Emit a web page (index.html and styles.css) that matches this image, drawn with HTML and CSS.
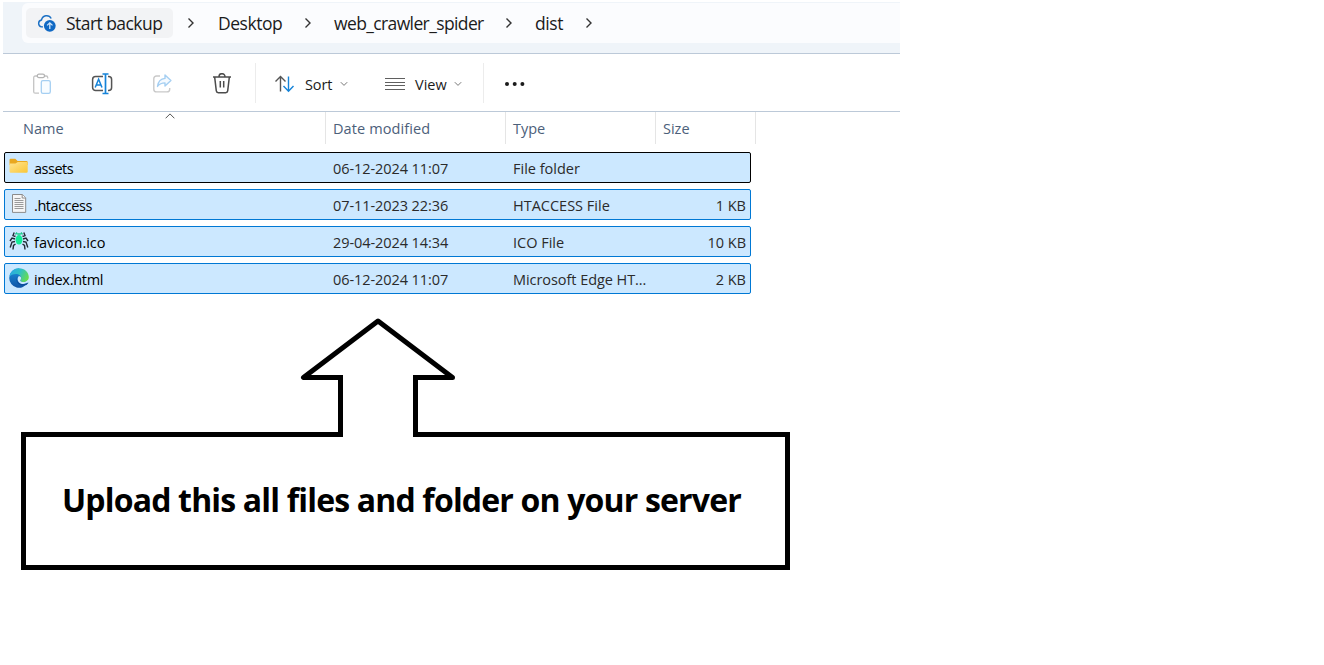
FILE: index.html
```html
<!DOCTYPE html>
<html lang="en">
<head>
<meta charset="utf-8">
<title>dist</title>
<link rel="stylesheet" href="styles.css">
</head>
<body>
<main class="window">
  <header class="address">
    <nav class="address-field">
      <span class="backup">
        <svg class="cloud" width="20" height="20" viewBox="0 0 20 20" fill="none">
          <path d="M6 13.900H4.600A3.500 3.500 0 0 1 4.500 7 5.200 5.200 0 0 1 14.200 5.500" stroke="#1a6fc4" stroke-width="1.400"/>
          <circle cx="12.800" cy="12.800" r="5.900" fill="#1069c4"/>
          <path d="M12.800 16V10M10.100 12.400l2.700-2.600 2.700 2.600" stroke="#cfe5fa" stroke-width="1.300"/>
        </svg>
        <span class="t-backup">Start backup</span>
      </span>
      <svg class="chev c1" width="8" height="12" viewBox="0 0 8 12"><path d="M1.500 1.500L6 6 1.500 10.500"/></svg>
      <span class="crumb t-desktop">Desktop</span>
      <svg class="chev c2" width="8" height="12" viewBox="0 0 8 12"><path d="M1.500 1.500L6 6 1.500 10.500"/></svg>
      <span class="crumb t-spider">web_crawler_spider</span>
      <svg class="chev c3" width="8" height="12" viewBox="0 0 8 12"><path d="M1.500 1.500L6 6 1.500 10.500"/></svg>
      <span class="crumb t-dist">dist</span>
      <svg class="chev c4" width="8" height="12" viewBox="0 0 8 12"><path d="M1.500 1.500L6 6 1.500 10.500"/></svg>
    </nav>
  </header>

  <div class="toolbar">
    <div class="tools">
      <svg width="22" height="22" viewBox="0 0 22 22" fill="none" stroke-width="1.300">
        <path d="M6 3H4.200a1.500 1.500 0 0 0-1.500 1.500v14.200a1.500 1.500 0 0 0 1.500 1.500H8M13 3h2.200a1.500 1.500 0 0 1 1.500 1.500V5.500" stroke="#c4c4c4"/>
        <rect x="6.300" y="1.200" width="7.200" height="3.400" rx="1.600" stroke="#b4b4b4"/>
        <rect x="10.300" y="7.600" width="9" height="12.800" rx="1.600" stroke="#a5cff2" fill="#f8fcff"/>
      </svg>
      <svg width="22" height="22" viewBox="0 0 22 22" fill="none" stroke-width="1.500">
        <path d="M12 3.400H4.600A3 3 0 0 0 1.600 6.400v8.200a3 3 0 0 0 3 3H12M17 3.400h.6a3 3 0 0 1 3 3v8.200a3 3 0 0 1-3 3H17" stroke="#555"/>
        <path d="M14.500 1v19.500M11.500 1h6M11.500 20.500h6" stroke="#1583d8" stroke-width="1.700"/>
        <path d="M4.200 14.500l3.400-8.300 3.400 8.300M5.300 12h4.600" stroke="#1583d8" stroke-width="1.500"/>
      </svg>
      <svg width="22" height="22" viewBox="0 0 22 22" fill="none" stroke-width="1.400">
        <path d="M9 3H5.500A2.700 2.700 0 0 0 2.800 5.700v10.500a2.700 2.700 0 0 0 2.700 2.700H16a2.700 2.700 0 0 0 2.700-2.700V15" stroke="#c9c9c9"/>
        <path d="M14 2l5.900 5.500L14 13.100V9.900c-3.500 0-5.500 1-7.500 3.500.6-4.500 3-7.600 7.500-8z" stroke="#a5cff2" stroke-linejoin="round" fill="#f5faff"/>
      </svg>
      <svg width="22" height="22" viewBox="0 0 22 22" fill="none" stroke="#4c4c4c" stroke-width="1.500">
        <path d="M2 4h18M8 3.700a3 3 0 0 1 6 0M3.700 4.300l1.600 13.600a2 2 0 0 0 2 1.800h7.400a2 2 0 0 0 2-1.800l1.600-13.600M9.300 8v6.500M12.700 8v6.500"/>
      </svg>
    </div>
    <div class="menus">
      <svg class="sort-icon" width="22" height="18" viewBox="0 0 22 18" fill="none" stroke-width="1.400">
        <path d="M6.500 16.500V1.500M1.500 6.500l5-5 5 5" stroke="#555"/>
        <path d="M14.500 1.500v15M9.500 11l5 5.300 5-5.300" stroke="#1583d8"/>
      </svg>
      <span class="t-sort">Sort</span>
      <svg class="down d1" width="8" height="6" viewBox="0 0 8 6"><path d="M.8 1.200L4 4.400 7.200 1.200"/></svg>
      <svg class="view-icon" width="20" height="14" viewBox="0 0 20 14"><path d="M0 1.500h20M0 5.500h20M0 8.500h20M0 12.500h20" stroke="#5f5f5f"/></svg>
      <span class="t-view">View</span>
      <svg class="down d2" width="8" height="6" viewBox="0 0 8 6"><path d="M.8 1.200L4 4.400 7.200 1.200"/></svg>
    </div>
    <svg class="more" width="22" height="6" viewBox="0 0 22 6"><circle cx="3" cy="3" r="2"/><circle cx="10.700" cy="3" r="2"/><circle cx="18.400" cy="3" r="2"/></svg>
  </div>

  <div class="columns">
    <span class="head-name">Name<svg class="sorted" width="10" height="6" viewBox="0 0 10 6"><path d="M.6 5.300L5 .9l4.400 4.400" fill="none" stroke="#555"/></svg></span>
    <span class="t-hdate">Date modified</span><span class="t-htype">Type</span><span class="t-hsize">Size</span>
  </div>

  <section class="files">
    <div class="row focused">
      <span class="name">
        <svg width="20" height="20" viewBox="0 0 20 20">
          <defs><linearGradient id="folder" x1="0" y1="0" x2="1" y2="1"><stop offset="0" stop-color="#ffe594"/><stop offset="1" stop-color="#fac634"/></linearGradient></defs>
          <path d="M.5 3a1.200 1.200 0 0 1 1.200-1.200h4.600L8.600 4h8.900a1.200 1.200 0 0 1 1.200 1.200V8H.5z" fill="#e9a820"/>
          <path d="M.5 6.500h6L8.800 5h8.700a1.200 1.200 0 0 1 1.200 1.200v8.400a1.200 1.200 0 0 1-1.200 1.200H1.700a1.200 1.200 0 0 1-1.200-1.200z" fill="url(#folder)"/>
        </svg><span class="t-assets">assets</span></span>
      <span class="t-date">06-12-2024 11:07</span><span class="t-folder">File folder</span><span class="size"></span>
    </div>
    <div class="row">
      <span class="name">
        <svg width="20" height="20" viewBox="0 0 20 20">
          <path d="M3.500.5h10l3.200 3.200v14.700H3.500z" fill="#f5f5f5" stroke="#8b8b8b"/>
          <path d="M13.200.5V4h3.500" fill="#fff" stroke="#8b8b8b"/>
          <path d="M5.500 4.500h6M5.500 6.500h9M5.500 8.500h9M5.500 10.500h9M5.500 12.500h9M5.500 14.500h9" stroke="#9a9a9a"/>
        </svg><span class="t-ht">.htaccess</span></span>
      <span class="t-date">07-11-2023 22:36</span><span class="t-htfile">HTACCESS File</span><span class="size">1 KB</span>
    </div>
    <div class="row">
      <span class="name">
        <svg width="20" height="20" viewBox="0 0 20 20">
          <path d="M6.500 5.500L4 4.500l1.200-3M6 8L3 7 1 10M6 10.500L3 11l-1.800 5.500M6.500 13l-2 1.500-.5 4M13.500 5.500l2.500-1-1.200-3M14 8l3-1 2 3M14 10.500l3 .5 1.800 5.500M13.500 13l2 1.500.5 4" fill="none" stroke="#202a34" stroke-width="1.400"/>
          <ellipse cx="10" cy="8.800" rx="3.500" ry="4.800" fill="#12ed97"/>
          <path d="M6.500 3.500L8 1.500M13.500 3.500L12 1.500M8.200 3h3.600" stroke="#19c98a" stroke-width="1.300"/>
        </svg><span class="t-fav">favicon.ico</span></span>
      <span class="t-date">29-04-2024 14:34</span><span class="t-ico">ICO File</span><span class="size">10 KB</span>
    </div>
    <div class="row">
      <span class="name">
        <svg width="20" height="20" viewBox="0 0 20 20">
          <defs>
            <linearGradient id="wave" x1="0" y1=".2" x2="1" y2=".6"><stop offset="0" stop-color="#2aa7e5"/><stop offset=".5" stop-color="#30c1c3"/><stop offset="1" stop-color="#69dd4c"/></linearGradient>
            <linearGradient id="deep" x1="0" y1="0" x2="0" y2="1"><stop offset="0" stop-color="#1d91dc"/><stop offset="1" stop-color="#1054a5"/></linearGradient>
          </defs>
          <path d="M.2 10A9.800 9.800 0 0 1 10 .2l6 12.800 2.600 1.600A9.800 9.800 0 0 1 .2 10z" fill="url(#deep)"/>
          <path d="M.4 8.500C1.300 3.400 5.300.2 10 .2c5.800 0 9.800 4.300 9.800 8.900 0 3.300-2.600 5-5.200 5-2 0-3.300-.7-3.300-1.500 0-.5.900-1 .9-2.600 0-2.400-2.200-4.100-5.200-4.100-3 0-5.600 1.300-6.600 2.600z" fill="url(#wave)"/>
          <path d="M8.600 7.800c-2 3.300-.3 7.900 4.400 8.400 2.200.2 4.300-.6 5.800-1.600.4-.3.800.1.500.5-.5.800-1.200 1.500-1.800 2-4.600 1.500-10.300-.9-10-5.600.1-1.800.6-3 1.100-3.700z" fill="#0e4b98"/>
          <path d="M12.100 10c0 1.500-.9 2-.9 2.600 0 .8 1.400 1.500 3.400 1.500 1.600 0 3.300-.6 4.300-1.800l.4 1.800c-2.200 2-6.700 2.600-9 .6-2-1.700-2.100-4.300-.9-6.100.9-.7 2.700.1 2.700 1.400z" fill="#cbe8ff"/>
        </svg><span class="t-index">index.html</span></span>
      <span class="t-date">06-12-2024 11:07</span><span class="t-edge">Microsoft Edge HT...</span><span class="size">2 KB</span>
    </div>
  </section>

  <section class="callout">
    <svg class="outline" width="769" height="252" viewBox="0 0 769 252"><path d="M319.500 116.500H2.500v133h764v-133h-372V59.500h37L357 3 282.500 59.500h37v59.500M394.500 119V59.500" fill="none" stroke="#000" stroke-width="5" stroke-linejoin="round"/><path d="M0 114h5v5H0zM764 114h5v5h-5zM0 247h5v5H0zM764 247h5v5h-5zM317 57h5v5h-5zM392 57h5v5h-5zM317 114h5v5h-5zM392 114h5v5h-5z"/></svg>
    <p class="message">Upload this all files and folder on your server</p>
  </section>
</main>
</body>
</html>
```
FILE: styles.css
```css
body {
  margin: 0;
  background: #fff;
  color: #1b1b1b;
  font-family: "Open Sans", "Noto Sans", sans-serif;
  font-size: 14.5px;
}
svg { display: block; flex: none; }
span { white-space: nowrap; }

.window { width: 897px; margin-left: 3px; padding-top: 2px; }

.address {
  height: 50px;
  padding: 1px 0 0 19px;
  background: #eff4f9;
  border-bottom: 1px solid #bcc9d8;
}
.address-field {
  display: flex;
  align-items: center;
  height: 40px;
  padding-left: 4px;
  background: #fbfcfe;
  border-radius: 6px 0 0 6px;
  font-size: 17.5px;
}
.backup {
  display: flex;
  align-items: center;
  gap: 9px;
  box-sizing: border-box;
  width: 147px;
  height: 30px;
  padding-left: 11px;
  background: #f2f3f5;
  border-radius: 5px;
}
.t-backup { letter-spacing: -0.55px; }
.chev { fill: none; stroke: #333; stroke-width: 1.4; }
.c1 { margin-left: 14px; }
.t-desktop { width: 64px; margin-left: 23px; letter-spacing: -0.45px; }
.c2 { margin-left: 22px; }
.t-spider { width: 150px; margin-left: 22px; letter-spacing: -0.62px; }
.c3 { margin-left: 21px; }
.t-dist { width: 29px; margin-left: 22px; letter-spacing: -0.4px; }
.c4 { margin-left: 21px; }

.toolbar {
  display: flex;
  align-items: center;
  height: 57px;
  border-bottom: 1px solid #bcc9d8;
}
.tools, .menus {
  display: flex;
  align-items: center;
  box-sizing: border-box;
  height: 40px;
  padding-top: 3px;
  border-right: 1px solid #ececec;
}
.tools { gap: 38px; width: 253px; padding-left: 28px; }
.menus { width: 228px; padding-left: 18px; }
.t-sort { width: 28px; margin-left: 9px; letter-spacing: -0.1px; }
.t-view { width: 32px; margin-left: 10px; }
.down { fill: none; stroke: #777; }
.d1 { margin-left: 7px; }
.d2 { margin-left: 7px; }
.view-icon { margin-left: 37px; }
.more { margin: 3px 0 0 20px; fill: #1b1b1b; }

.columns {
  display: grid;
  grid-template-columns: 323px 180px 150px 100px;
  height: 32px;
  line-height: 34px;
  color: #4c607a;
}
.columns > span {
  box-sizing: border-box;
  height: 32px;
  padding-left: 7px;
  border-right: 1px solid #e5e5e5;
}
.columns > .head-name { position: relative; padding-left: 20px; }
.t-hdate { letter-spacing: 0.1px; }
.sorted { position: absolute; left: 162px; top: 1px; }

.files {
  display: flex;
  flex-direction: column;
  gap: 6px;
  width: 747px;
  padding: 8px 0 0 1px;
}
.row {
  display: grid;
  grid-template-columns: 320px 180px 150px 95px;
  height: 29px;
  line-height: 31px;
  background: #cce8ff;
  border: 1px solid #0078d4;
  border-radius: 2px;
  color: #2b2b2b;
}
.focused { border-color: #000; }
.row > span { padding-left: 8px; }
.row > .name {
  display: flex;
  gap: 5px;
  padding-left: 4px;
  color: #000;
}
.name > svg { margin-top: 4px; }
.t-assets { letter-spacing: -0.5px; }
.t-ht { letter-spacing: -0.42px; }
.t-index { letter-spacing: -0.3px; }
.t-date { letter-spacing: -0.08px; }
.t-edge { letter-spacing: -0.06px; }
.row > .size { padding: 0 4px 0 0; text-align: right; }

.callout {
  display: grid;
  width: 769px;
  margin: 24px 0 0 18px;
}
.outline, .message { grid-area: 1 / 1; }
.message {
  margin: 158px 0 0 41px;
  line-height: 48px;
  white-space: nowrap;
  font-size: 32px;
  font-weight: 700;
  letter-spacing: -0.83px;
  color: #000;
}
```
